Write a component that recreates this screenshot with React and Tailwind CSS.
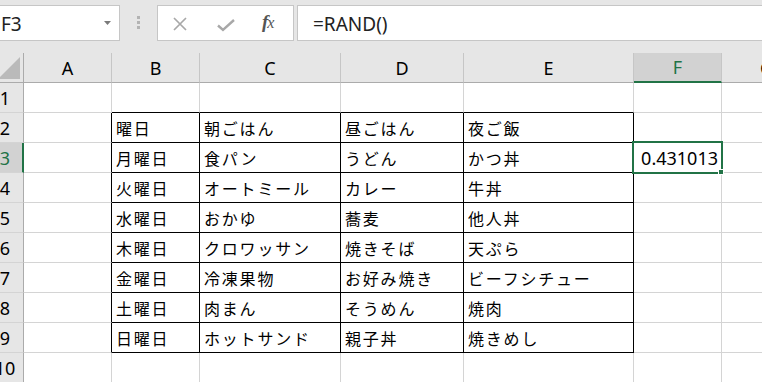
import React from 'react';

const WIDTHS = ['w-[88px]', 'w-[88px]', 'w-[141px]', 'w-[123px]', 'w-[170px]', 'w-[88px]', 'w-[90px]'];
const LETTERS = ['A', 'B', 'C', 'D', 'E', 'F', 'G'];

const TABLE = {
  2: ['曜日', '朝ごはん', '昼ごはん', '夜ご飯'],
  3: ['月曜日', '食パン', 'うどん', 'かつ丼'],
  4: ['火曜日', 'オートミール', 'カレー', '牛丼'],
  5: ['水曜日', 'おかゆ', '蕎麦', '他人丼'],
  6: ['木曜日', 'クロワッサン', '焼きそば', '天ぷら'],
  7: ['金曜日', '冷凍果物', 'お好み焼き', 'ビーフシチュー'],
  8: ['土曜日', '肉まん', 'そうめん', '焼肉'],
  9: ['日曜日', 'ホットサンド', '親子丼', '焼きめし'],
};

const inT = (r, c) => r >= 2 && r <= 9 && c >= 1 && c <= 4;

function cellText(r, c) {
  if (inT(r, c)) return TABLE[r][c - 1];
  return null;
}

function Cell({ r, c }) {
  const rb = inT(r, c) || inT(r, c + 1);
  const bb = inT(r, c) || inT(r + 1, c);
  const cls =
    'shrink-0 h-full border-r border-b flex items-center ' +
    WIDTHS[c] +
    (rb ? ' border-r-black' : ' border-r-[#d4d4d4]') +
    (bb ? ' border-b-black' : ' border-b-[#d4d4d4]');
  const t = cellText(r, c);
  const isNum = r === 3 && c === 5;
  return (
    <div className={cls}>
      {t && (
        <span className="pl-[4px] whitespace-nowrap font-['Noto_Sans_CJK_JP',sans-serif] text-[16px] leading-none tracking-[1.8px] text-black">
          {t}
        </span>
      )}
      {isNum && (
        <span className="w-full text-right pr-[3px] font-['Noto_Sans',sans-serif] text-[18px] leading-none text-black">
          0.431013
        </span>
      )}
    </div>
  );
}

function RowHeader({ r }) {
  const active = r === 3;
  return (
    <div
      className={
        'shrink-0 w-[24px] h-full overflow-hidden flex items-center border-b border-b-[#d4d4d4] ' +
        (active ? 'bg-[#d2d2d2] border-r-2 border-r-[#217346]' : 'bg-[#e6e6e6] border-r border-r-[#ababab]')
      }
    >
      <div
        className={
          "shrink-0 w-[38px] ml-[-14px] text-center font-['Noto_Sans',sans-serif] text-[18px] leading-none " +
          (active ? 'text-[#217346]' : 'text-black')
        }
      >
        {r}
      </div>
    </div>
  );
}

export default function App() {
  const rows = [1, 2, 3, 4, 5, 6, 7, 8, 9, 10];
  return (
    <div className="relative w-[762px] h-[382px] overflow-hidden bg-[#e6e6e6] select-none">
      {/* Top formula bar */}
      <div className="h-[53px] flex items-start pt-[5px]">
        <div className="shrink-0 w-[120px] h-[36px] bg-white border border-[#c6c6c6] border-l-0 flex items-center justify-between pr-[8px]">
          <span className="pl-[1px] pt-[3px] font-['Noto_Sans',sans-serif] text-[19px] leading-none text-[#222]">F3</span>
          <svg width="7" height="4" viewBox="0 0 7 4">
            <polygon points="0,0 7,0 3.5,4" fill="#7a7a7a" />
          </svg>
        </div>
        <div className="shrink-0 ml-[17px] mt-[11px] flex flex-col gap-[2px]">
          <div className="w-[3px] h-[3px] bg-[#b3b3b3]" />
          <div className="w-[3px] h-[3px] bg-[#b3b3b3]" />
          <div className="w-[3px] h-[3px] bg-[#b3b3b3]" />
        </div>
        <div className="shrink-0 ml-[17px] w-[137px] h-[36px] bg-white border border-[#c6c6c6] relative">
          <svg className="absolute left-[14px] top-[11px]" width="16" height="14" viewBox="0 0 16 14">
            <path d="M2 1 L14 13 M14 1 L2 13" stroke="#a8a8a8" strokeWidth="1.7" fill="none" />
          </svg>
          <svg className="absolute left-[59px] top-[13px]" width="18" height="13" viewBox="0 0 18 13">
            <path d="M1 6.5 L6 11 L17 1" stroke="#a8a8a8" strokeWidth="2.4" fill="none" />
          </svg>
          <span className="absolute left-[104px] top-[6px] font-['Liberation_Serif',serif] italic text-[19px] leading-none text-[#555] font-bold tracking-[-1px]">
            f<span className="text-[16px] font-normal">x</span>
          </span>
        </div>
        <div className="flex-1 ml-[3px] h-[36px] bg-white border border-[#c6c6c6] border-r-0 flex items-center pl-[15px]">
          <span className="pt-[3px] font-['Noto_Sans',sans-serif] text-[19px] leading-none text-[#222]">=RAND()</span>
        </div>
      </div>

      {/* Column headers */}
      <div className="flex h-[30px]">
        <div className="shrink-0 w-[24px] h-full overflow-hidden flex items-end justify-end pr-[3px] pb-[3px] border-r border-b border-[#ababab] bg-[#e6e6e6]">
          <svg className="shrink-0" width="22" height="22" viewBox="0 0 22 22">
            <polygon points="22,0 22,22 0,22" fill="#bababa" />
          </svg>
        </div>
        {LETTERS.map((L, i) => {
          const active = L === 'F';
          return (
            <div
              key={L}
              className={
                'shrink-0 h-full flex items-center justify-center border-r border-r-[#c6c6c6] font-[\'Noto_Sans\',sans-serif] text-[18px] leading-none ' +
                WIDTHS[i] +
                (active
                  ? ' bg-[#d2d2d2] border-b-2 border-b-[#217346] text-[#217346]'
                  : ' bg-[#e6e6e6] border-b border-b-[#ababab] text-black')
              }
            >
              {L}
            </div>
          );
        })}
      </div>

      {/* Grid rows */}
      <div className="bg-white">
        {rows.map((r) => (
          <div key={r} className="flex h-[30px]">
            <RowHeader r={r} />
            {LETTERS.map((L, c) => (
              <Cell key={L} r={r} c={c} />
            ))}
          </div>
        ))}
      </div>

      {/* Selection overlay */}
      <div className="absolute left-[632px] top-[141px] w-[91px] h-[33px] border-2 border-[#217346]" />
      <div className="absolute left-[718px] top-[169px] w-[6px] h-[6px] bg-[#217346] border border-white" />
    </div>
  );
}
